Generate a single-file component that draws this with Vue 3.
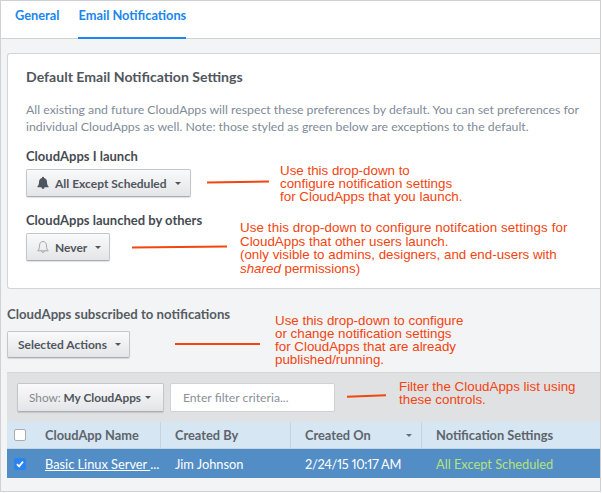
<script setup>
const columns = [
  { label: 'Created By', cls: 'col-by' },
  { label: 'Created On', cls: 'col-on', sort: true },
  { label: 'Notification Settings', cls: 'col-set' }
]
</script>

<template>
  <div class="page">
    <nav class="tabs">
      <a class="tab">General</a>
      <a class="tab active">Email Notifications</a>
    </nav>
    <main class="content">
      <section class="card">
        <h2>Default Email Notification Settings</h2>
        <p class="desc">All existing and future CloudApps will respect these preferences by default. You can set preferences for individual CloudApps as well. Note: those styled as green below are exceptions to the default.</p>
        <h3 class="first">CloudApps I launch</h3>
        <button class="btn btn-all">
          <svg class="bell" viewBox="0 0 12 14" width="12" height="14"><path fill="#4f555c" d="M6 0.8c.6 0 1 .4 1 .9v.4c2 .4 3 2 3 4 0 2.300.6 3.600 1.600 4.400v.8H.4v-.8C1.400 9.700 2 8.400 2 6.100c0-2 1-3.600 3-4v-.4c0-.5.4-.9 1-.9zM4.500 11.300h3c0 .9-.7 1.600-1.500 1.600s-1.500-.7-1.500-1.600z"/></svg>
          <span>All Except Scheduled</span><i class="caret"></i>
        </button>
        <h3 class="second">CloudApps launched by others</h3>
        <button class="btn btn-never">
          <svg class="bell" viewBox="0 0 12 14" width="12" height="14"><path fill="none" stroke="#9a9fa5" stroke-width=".9" d="M6 1.500c-2.300 0-3.500 1.900-3.500 4.300 0 2.600-.6 3.900-1.700 5h10.400c-1.100-1.100-1.700-2.400-1.700-5 0-2.400-1.200-4.300-3.500-4.300zM4.700 11c0 .9.600 1.600 1.300 1.600s1.300-.7 1.300-1.600"/></svg>
          <span>Never</span><i class="caret"></i>
        </button>
      </section>
      <h3 class="sub-title">CloudApps subscribed to notifications</h3>
      <button class="btn btn-sel"><span>Selected Actions</span><i class="caret"></i></button>
      <section class="table-wrap">
        <div class="toolbar">
          <button class="btn btn-show"><span class="light">Show:</span>&nbsp;<span>My CloudApps</span><i class="caret"></i></button>
          <input class="filter" placeholder="Enter filter criteria..." />
        </div>
        <div class="grid head">
          <div class="cell col-check"><span class="check"></span></div>
          <div class="cell col-name">CloudApp Name</div>
          <div v-for="c in columns" :key="c.label" class="cell" :class="c.cls">{{ c.label }}<i v-if="c.sort" class="caret sort"></i></div>
        </div>
        <div class="grid row">
          <div class="cell col-check"><span class="check on"><svg viewBox="0 0 10 10" width="10" height="10"><path d="M2 5.200l2.100 2.200L8 2.600" fill="none" stroke="#fff" stroke-width="1.700"/></svg></span></div>
          <div class="cell col-name"><a class="name">Basic Linux Server </a><span>...</span></div>
          <div class="cell col-by">Jim Johnson</div>
          <div class="cell col-on nums">2/24/15 10:17 AM</div>
          <div class="cell col-set green">All Except Scheduled</div>
        </div>
      </section>
    </main>

    <i class="line l1"></i>
    <i class="line l2"></i>
    <i class="line l3"></i>
    <i class="line l4"></i>

    <div class="note n1">Use this drop-down to<br>configure notification settings<br>for CloudApps that you launch.</div>
    <div class="note n2"><span class="wide">Use this drop-down to configure notifcation settings for</span><br>CloudApps that other users launch.<br>(only visible to admins, designers, and end-users with<br><em>shared</em> permissions)</div>
    <div class="note n3">Use this drop-down to configure<br>or change notification settings<br>for CloudApps that are already<br>published/running.</div>
    <div class="note n4">Filter the CloudApps list using<br>these controls.</div>
  </div>
</template>

<style>
html, body { margin: 0; background: #fff; }
</style>

<style scoped>
.page {
  position: relative;
  box-sizing: border-box;
  width: 601px;
  height: 492px;
  border: 1px solid #cfd1d5;
  font-family: Lato, "Open Sans", sans-serif;
  overflow: hidden;
  background: #fff;
}
.tabs {
  display: flex;
  gap: 19px;
  height: 37px;
  padding-left: 14px;
  border-bottom: 1px solid #cfd2d6;
}
.tab {
  box-sizing: border-box;
  height: 38px;
  padding-top: 6px;
  color: #1a86ee;
  font-size: 12.800px;
  font-weight: 700;
}
.tab.active { border-bottom: 2px solid #1a86ee; }
.content {
  background: #f3f4f6;
  height: 453px;
  padding: 14px 0 0 6px;
  box-sizing: border-box;
}
.card {
  box-sizing: border-box;
  height: 236px;
  background: #fff;
  border: 1px solid #d2d5d9;
  border-right: 0;
  border-radius: 3px 0 0 3px;
  padding: 14px 0 0 18px;
}
h2 {
  margin: 0;
  font-size: 14.100px;
  line-height: 18px;
  font-weight: 700;
  color: #50565d;
}
.desc {
  margin: 15px 0 0;
  width: 560px;
  font-size: 12.300px;
  line-height: 17px;
  color: #7f8b98;
}
h3 {
  margin: 0;
  font-size: 13px;
  line-height: 16px;
  font-weight: 700;
  color: #464b52;
}
.first { margin-top: 13px; }
.second { margin-top: 15px; }
.btn {
  display: flex;
  align-items: center;
  box-sizing: border-box;
  height: 28px;
  margin-top: 5px;
  padding: 0;
  border: 1px solid #c3c7cc;
  border-bottom-color: #a9aeb5;
  border-radius: 2px;
  background: linear-gradient(#fafafb, #e4e5e8);
  box-shadow: 0 1px 1px rgba(0, 0, 0, .12);
  font: 700 12px Lato, "Open Sans", sans-serif;
  color: #50565d;
}
.btn-all { width: 165px; padding-left: 10px; }
.btn-never { width: 84px; padding-left: 10px; }
.btn-sel { width: 123px; height: 27px; padding-left: 10px; margin-top: 8px; }
.bell { margin-right: 6px; }
.caret {
  display: inline-block;
  width: 0;
  height: 0;
  margin-left: 8px;
  border: 3px solid transparent;
  border-top-color: #50565d;
  border-bottom: 0;
}
.sub-title {
  margin-top: 16px;
  font-size: 13.200px;
  line-height: 18px;
  color: #565c63;
}
.table-wrap { margin-top: 14px; background: #fff; }
.toolbar {
  display: flex;
  align-items: center;
  gap: 6px;
  box-sizing: border-box;
  height: 50px;
  padding: 0 0 0 10px;
  background: #e0e1e3;
  border-top: 1px solid #d5d7da;
}
.btn-show { width: 147px; height: 29px; margin: 0; padding-left: 11px; font-size: 11.800px; }
.btn-show .caret { margin-left: 4px; }
.light { font-weight: 400; color: #858a90; }
.filter {
  box-sizing: border-box;
  width: 165px;
  height: 29px;
  padding: 0 12px;
  border: 1px solid #cfd2d6;
  border-radius: 2px;
  background: #fff;
  font: 12.200px Lato, "Open Sans", sans-serif;
}
.filter::placeholder { color: #8a919a; opacity: 1; }
.grid {
  display: grid;
  grid-template-columns: 38px 116px 130px 131px 178px;
}
.cell {
  display: flex;
  align-items: center;
  min-width: 0;
  box-sizing: border-box;
  white-space: nowrap;
  overflow: hidden;
  font-size: 12.800px;
  padding-left: 14px;
}
.head {
  height: 27px;
  background: #d6e6f2;
  border-bottom: 1px solid #c3d5e3;
  box-sizing: border-box;
  font-weight: 700;
  color: #5d646c;
}
.head .cell { border-right: 1px solid #c3d5e3; }
.head .col-check, .head .col-set { border-right: 0; }
.col-name, .col-name.cell { padding-left: 0; }
.sort { position: absolute; left: 405px; margin: 0; border-top-color: #6a7078; }
.row {
  height: 29px;
  background: #538dc5;
  color: #fff;
}
.col-check.cell { padding-left: 7px; }
.check {
  box-sizing: border-box;
  display: flex;
  align-items: center;
  justify-content: center;
  width: 12px;
  height: 12px;
  border: 1px solid #a9adb2;
  border-radius: 2px;
  background: #fff;
}
.check.on { background: #2b84ee; border-color: #2b84ee; }
.name { text-decoration: underline; white-space: pre; }
.nums { font-variant-numeric: proportional-nums; letter-spacing: -.3px; }
.green { color: #b3e27a; }
.line {
  position: absolute;
  height: 1.500px;
  background: #f4440f;
}
.l1 { left: 206px; top: 180px; width: 62px; transform: rotate(-1deg); }
.l2 { left: 131px; top: 245px; width: 95px; transform: rotate(-.5deg); }
.l3 { left: 174px; top: 342px; width: 85px; }
.l4 { left: 346px; top: 394px; width: 39px; transform: rotate(-2deg); }
.note {
  position: absolute;
  font-family: "Liberation Sans", Arial, sans-serif;
  font-size: 13.350px;
  line-height: 13px;
  color: #f4440f;
  white-space: nowrap;
}
.n1 { left: 279px; top: 163px; }
.n2 { left: 239px; top: 220px; line-height: 13.600px; }
.n3 { left: 274px; top: 313px; }
.n4 { left: 398px; top: 379px; }
.wide { letter-spacing: .1px; }
</style>
